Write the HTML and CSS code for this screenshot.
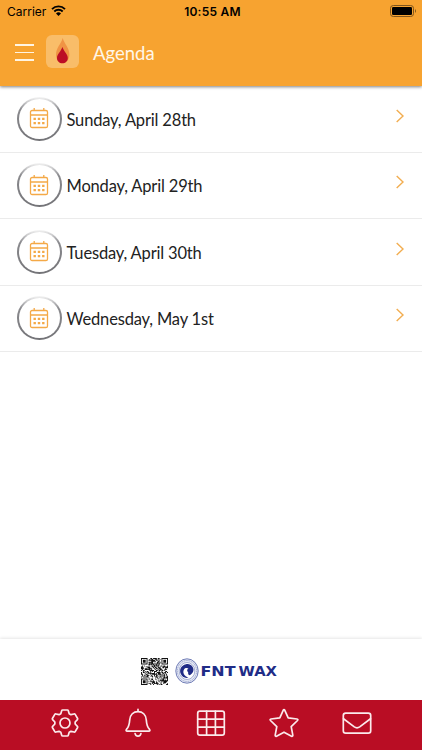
FILE: index.html
```html
<!DOCTYPE html>
<html lang="en">
<head>
  <meta charset="UTF-8" />
  <meta name="viewport" content="width=device-width, initial-scale=1.0"/>
  <title>Agenda</title>
  <link rel="stylesheet" href="styles.css">
</head>
<body>
  <svg class="defs">
    <symbol id="calendar" viewBox="0 0 20 22">
      <rect x="1.5" y="3.5" width="17" height="17" rx="1.6"/>
      <path d="M1.5 8H18.5M5.2 1V4M14.8 1V4"/>
      <path class="dots" d="M4.5 11.9h2.4M8.8 11.9h2.4M13.1 11.9h2.4M4.5 16.1h2.4M8.8 16.1h2.4M13.1 16.1h2.4"/>
    </symbol>
    <symbol id="chevron" viewBox="0 0 10 14">
      <path d="M1.7 1L8 7L1.7 13"/>
    </symbol>
  </svg>

  <header>
    <div class="status">
      <div class="carrier">
        <span>Carrier</span>
        <svg class="wifi" viewBox="0 0 15 11">
          <path d="M1 4.1A9.2 9.2 0 0 1 14 4.1M3.3 6.5A6 6 0 0 1 11.7 6.5"/>
          <path class="solid" d="M7.5 11L5 8.4A3.6 3.6 0 0 1 10 8.4Z"/>
        </svg>
      </div>
      <div class="clock">10:55 AM</div>
      <div class="power">
        <svg class="battery" viewBox="0 0 27 12">
          <rect class="case" x=".5" y=".5" width="23" height="11" rx="2.8"/>
          <rect x="2" y="2" width="20" height="8" rx="1.3"/>
          <path class="cap" d="M25 4Q27 6 25 8Z"/>
        </svg>
      </div>
    </div>
    <div class="navbar">
      <div class="burger"><i></i><i></i><i></i></div>
      <svg class="logo" viewBox="0 0 33 33">
        <rect width="33" height="33" rx="6" fill="#f9bd69"/>
        <path d="M16.7 3C18.5 9 23.4 13 23.4 19.5C23.4 24.5 20.5 28 16.7 28S10 24.5 10 19.5C10 13 15 9 16.7 3Z" fill="#f09444"/>
        <path d="M16.4 12C17.8 16.5 21.8 19 21.8 23C21.8 26.2 19.4 28.3 16.4 28.3S11 26.2 11 23C11 19 15 16.5 16.4 12Z" fill="#bc0d25"/>
      </svg>
      <h1>Agenda</h1>
    </div>
  </header>

  <main>
    <div class="row">
      <div class="circle"><svg class="cal"><use href="#calendar"/></svg></div>
      <span>Sunday, April 28th</span>
      <svg class="chev"><use href="#chevron"/></svg>
    </div>
    <div class="row">
      <div class="circle"><svg class="cal"><use href="#calendar"/></svg></div>
      <span>Monday, April 29th</span>
      <svg class="chev"><use href="#chevron"/></svg>
    </div>
    <div class="row">
      <div class="circle"><svg class="cal"><use href="#calendar"/></svg></div>
      <span>Tuesday, April 30th</span>
      <svg class="chev"><use href="#chevron"/></svg>
    </div>
    <div class="row">
      <div class="circle"><svg class="cal"><use href="#calendar"/></svg></div>
      <span>Wednesday, May 1st</span>
      <svg class="chev"><use href="#chevron"/></svg>
    </div>
  </main>

  <div class="sponsor">
    <svg class="qr" viewBox="0 0 29 29"><path id="qrPath"/></svg>
    <svg class="seal" viewBox="0 0 24 26">
      <ellipse cx="12" cy="13" rx="11.2" ry="12.2" fill="#e4e8f4" stroke="#5261a6" stroke-width=".8"/>
      <ellipse cx="12" cy="13" rx="9.6" ry="10.5" fill="none" stroke="#8b97c6" stroke-width=".8" stroke-dasharray="1.2 .7"/>
      <ellipse cx="12" cy="13" rx="7.8" ry="8.5" fill="#fff" stroke="#7683bb" stroke-width=".6"/>
      <path d="M11 6.3C6 7.5 3.8 12 6 16.3C7.3 19.2 10.6 20.7 13.5 19.5C9.3 18.6 7.2 14.5 9 11.5C10 9.7 12.2 9.6 13.5 10.6C11.8 11.4 11.7 13.4 13.2 14.3C12.9 15.4 13.3 16.7 14.3 17.3C18 16 19.7 12 17.5 8.8C16 6.5 13.5 5.7 11 6.3Z" fill="#202c87"/>
    </svg>
    <svg class="brand" viewBox="0 0 77 14">
      <text x="-.5" y="11.5" textLength="35" lengthAdjust="spacingAndGlyphs">FNT</text>
      <text x="37.5" y="11.5" textLength="38.5" lengthAdjust="spacingAndGlyphs">WAX</text>
    </svg>
  </div>

  <footer>
    <svg viewBox="-15 -15 30 30">
      <path d="M-4.2 -9.3L-3.3 -12.3Q-3.1 -13 -2.4 -13H2.4Q3.1 -13 3.3 -12.3L4.2 -9.3L5.95 -8.3L9 -9Q9.8 -9.2 10.2 -8.6L12.6 -4.5Q12.9 -3.9 12.4 -3.4L10.15 -1V1L12.4 3.4Q12.9 3.9 12.6 4.5L10.2 8.6Q9.8 9.2 9 9L5.95 8.3L4.2 9.3L3.3 12.3Q3.1 13 2.4 13H-2.4Q-3.1 13 -3.3 12.3L-4.2 9.3L-5.95 8.3L-9 9Q-9.8 9.2 -10.2 8.6L-12.6 4.5Q-12.9 3.9 -12.4 3.4L-10.15 1V-1L-12.4 -3.4Q-12.9 -3.9 -12.6 -4.5L-10.2 -8.6Q-9.8 -9.2 -9 -9L-5.95 -8.3Z"/>
      <circle r="5"/>
    </svg>
    <svg viewBox="-15 -15 30 30">
      <path d="M0 -13.6V-11.5M-11 8.2H11Q12.6 7.8 11.4 6.2C9 3.8 8.6 1.5 8.3 -3C8 -8.2 4.5 -11.4 0 -11.4S-8 -8.2 -8.3 -3C-8.6 1.5 -9 3.8 -11.4 6.2Q-12.6 7.8 -11 8.2ZM-2.9 10.6Q-2.2 13.2 0 13.2T2.9 10.6"/>
    </svg>
    <svg viewBox="-15 -15 30 30">
      <rect x="-13.3" y="-11.8" width="26.6" height="24" rx="2.2"/>
      <path d="M-4.4 -11.8V12.2M4.4 -11.8V12.2M-13.3 -3.8H13.3M-13.3 4.2H13.3"/>
    </svg>
    <svg viewBox="-15 -15 30 30">
      <path d="M-.8 -12.7Q0 -14 .8 -12.7L4.2 -5.2L13 -4Q14.5 -3.6 13.5 -2.5L7.2 3.7L8.8 12.2Q8.8 13.7 7.5 13.2L0 9.2L-7.5 13.2Q-8.8 13.7 -8.8 12.2L-7.2 3.7L-13.5 -2.5Q-14.5 -3.6 -13 -4L-4.2 -5.2Z"/>
    </svg>
    <svg viewBox="-15 -15 30 30">
      <rect x="-13.7" y="-9.8" width="27.4" height="20" rx="2.4"/>
      <path d="M-13.5 -4.3L-2.7 3.9Q0 5.8 2.7 3.9L13.5 -4.3"/>
    </svg>
  </footer>

  <script src="qr.js"></script>
</body>
</html>
```

FILE: styles.css
```css
* {
  box-sizing: border-box;
}
body {
  margin: 0;
  height: 750px;
  display: flex;
  flex-direction: column;
  overflow: hidden;
  background: #fff;
  color: #222;
  font-family: Lato, sans-serif;
}
svg {
  display: block;
  flex: none;
  fill: none;
}
.defs {
  position: absolute;
  width: 0;
  height: 0;
}
header {
  height: 86px;
  flex: none;
  background: #f7a330;
  box-shadow: 0 1px 3px rgba(0, 0, 0, 0.5);
}
.status {
  height: 22px;
  padding: 0 5px 0 7px;
  display: grid;
  grid-template-columns: 1fr auto 1fr;
  align-items: center;
  font-family: Inter, sans-serif;
  font-size: 12px;
  color: #000;
}
.carrier {
  display: flex;
  align-items: center;
  gap: 5px;
}
.wifi {
  width: 15px;
  height: 11px;
  margin-top: -2px;
  stroke: #000;
  stroke-width: 1.9;
}
.wifi .solid {
  fill: #000;
  stroke: none;
}
.clock {
  padding-left: 1px;
  font-weight: 600;
  letter-spacing: 0.25px;
}
.power {
  display: flex;
  justify-content: flex-end;
  margin-top: -1px;
}
.battery {
  width: 27px;
  height: 12px;
  fill: #000;
}
.battery .case {
  fill: none;
  stroke: #80561d;
}
.battery .cap {
  fill: #80561d;
}
.navbar {
  height: 58px;
  padding-left: 15px;
  display: flex;
  align-items: center;
}
.burger {
  width: 19px;
  margin-right: 12px;
  padding-top: 3px;
  display: flex;
  flex-direction: column;
  gap: 6px;
}
.burger i {
  height: 1.5px;
  background: #fff4e2;
}
.logo {
  width: 33px;
  height: 33px;
}
h1 {
  margin: 3px 0 0 14px;
  font-size: 18.5px;
  font-weight: 400;
  color: #fff6e8;
}
main {
  flex: 1;
}
.row {
  height: 66.5px;
  padding: 0 17px 0 16.5px;
  display: flex;
  align-items: center;
  border-bottom: 1px solid #ebebeb;
  font-size: 16.5px;
  letter-spacing: -0.17px;
}
.row span {
  flex: 1;
  margin-left: 5px;
  padding-top: 2px;
}
.circle {
  width: 45px;
  height: 44px;
  display: flex;
  align-items: center;
  justify-content: center;
  border: 2px solid transparent;
  border-radius: 50%;
  background: linear-gradient(#fff, #fff) padding-box, linear-gradient(#f6f6f6, #8a8a8e 28%, #737377) border-box;
}
.cal {
  width: 20px;
  height: 22px;
  margin-top: -1px;
  stroke: #f4a947;
  stroke-width: 1.3;
}
.dots {
  stroke-width: 2.3;
}
.chev {
  width: 10px;
  height: 14px;
  margin-top: -6px;
  stroke: #f2ad50;
  stroke-width: 1.4;
}
.sponsor {
  height: 61px;
  flex: none;
  display: flex;
  align-items: center;
  padding: 3px 0 0 141px;
  box-shadow: 0 -1px 3px rgba(0, 0, 0, 0.1);
}
.qr {
  width: 27px;
  height: 27px;
}
.qr path {
  fill: #111;
}
.seal {
  width: 24px;
  height: 26px;
  margin: 0 2px 0 7px;
}
.brand {
  width: 77px;
  height: 14px;
  font-family: "DejaVu Sans", sans-serif;
  font-size: 14px;
  font-weight: bold;
  fill: #202c87;
}
footer {
  height: 50px;
  flex: none;
  padding: 0 29px 4px;
  display: flex;
  justify-content: space-around;
  align-items: center;
  background: #b90d24;
}
footer svg {
  width: 30px;
  height: 30px;
  stroke: #fbeaec;
  stroke-width: 1.7;
  stroke-linecap: round;
  stroke-linejoin: round;
}
```

FILE: qr.js
```js
const size = 29;
let seed = 71;
let d = "";

function finder(x, y) {
  return `M${x} ${y}h7v7h-7zm1 1v5h5v-5zm1 1h3v3h-3z`;
}

for (let y = 0; y < size; y++) {
  for (let x = 0; x < size; x++) {
    seed = (seed * 1103515245 + 12345) % 2147483648;
    const corner = (x < 8 && y < 8) || (x > 20 && y < 8) || (x < 8 && y > 20);
    if (!corner && seed / 2147483648 > 0.46) d += `M${x} ${y}h1v1h-1z`;
  }
}
d += finder(0, 0) + finder(22, 0) + finder(0, 22);
document.getElementById("qrPath").setAttribute("d", d);
document.getElementById("qrPath").setAttribute("fill-rule", "evenodd");
```
